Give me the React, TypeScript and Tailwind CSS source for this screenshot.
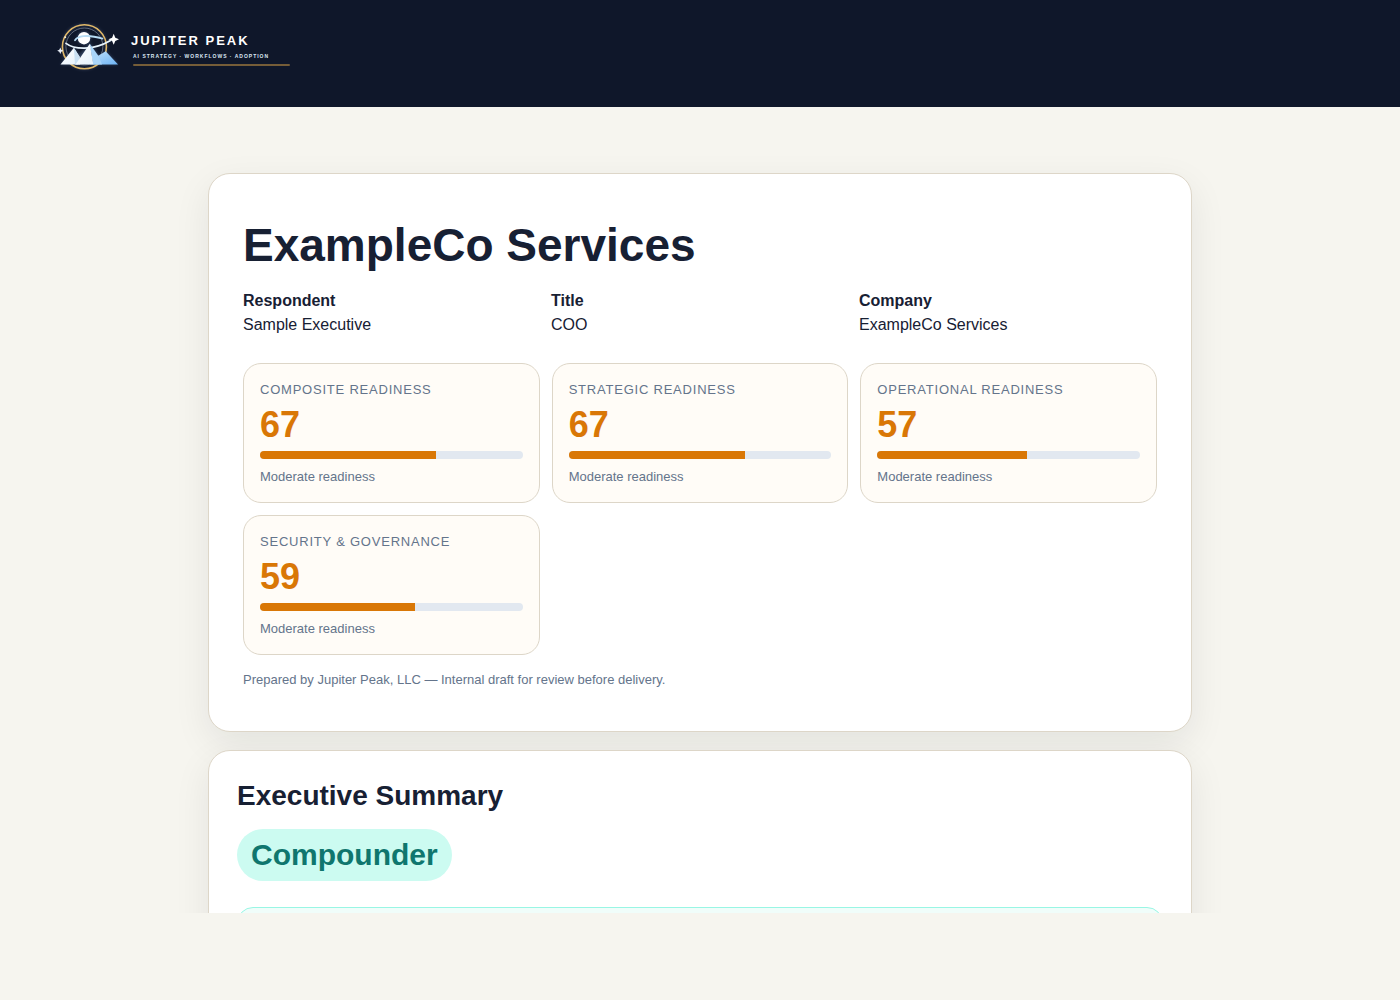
const respondent = [
  { label: 'Respondent', value: 'Sample Executive' },
  { label: 'Title', value: 'COO' },
  { label: 'Company', value: 'ExampleCo Services' },
];

const scores = [
  { label: 'Composite Readiness', value: 67, note: 'Moderate readiness' },
  { label: 'Strategic Readiness', value: 67, note: 'Moderate readiness' },
  { label: 'Operational Readiness', value: 57, note: 'Moderate readiness' },
  { label: 'Security & Governance', value: 59, note: 'Moderate readiness' },
];

function LogoMark() {
  return (
    <svg className="h-14 w-18 shrink-0" viewBox="52 18 72 56" fill="none" aria-hidden="true">
      <defs>
        <linearGradient id="snow" x1="0" y1="0" x2="1" y2="1">
          <stop offset="0" stopColor="#ffffff" />
          <stop offset="1" stopColor="#e6f2fc" />
        </linearGradient>
        <linearGradient id="ice" x1="0" y1="0" x2="1" y2="1">
          <stop offset="0" stopColor="#c4e2fb" />
          <stop offset="1" stopColor="#6db4f5" />
        </linearGradient>
        <filter id="glow" x="-50%" y="-50%" width="200%" height="200%">
          <feGaussianBlur stdDeviation="1.6" />
        </filter>
      </defs>

      {/* Halo */}
      <g filter="url(#glow)" opacity="0.3">
        <circle cx="84.4" cy="46.8" r="22" stroke="#7c8db5" strokeWidth="2" />
        <path d="M60.5 64.5 74 48l5 7 11-12 9 13 7-5 12 13.500Z" fill="#7fa8dd" />
        <circle cx="84" cy="38" r="6.500" fill="#9cc8ff" />
      </g>

      {/* Orbit rings */}
      <circle cx="84.4" cy="46.8" r="22" stroke="#e0b868" strokeWidth="1.600" />
      <circle cx="84.4" cy="46.500" r="18.500" stroke="#6b7688" strokeWidth="0.900" />

      {/* Planet */}
      <circle cx="84" cy="38.200" r="6.200" fill="#ffffff" />
      <path d="M75 40.300C77.500 36.400 86 33.800 102.500 38.600" stroke="#b7dcf4" strokeWidth="1.800" strokeLinecap="round" />
      <path d="M66 43.400C74 49.500 93 51 110.500 40.600" stroke="#e6f3fc" strokeWidth="1.800" strokeLinecap="round" />

      {/* Peaks */}
      <path d="M90 64.400 97 56.500 105.700 51.200 118 64.400Z" fill="url(#ice)" />
      <path d="M60.500 64.400 73.900 47.800 79.500 56.500 80 64.400Z" fill="url(#snow)" />
      <path d="M73.900 47.800 80 57.500 78 64.400 75 64.400Z" fill="#c9e1f4" />
      <path d="M89.800 43.800 98.500 56 102 64.400 93 64.400Z" fill="#a9d5fa" />
      <path d="M75.500 64.400 89.800 43.800 93.300 64.400Z" fill="url(#snow)" />

      {/* Stars */}
      <path d="M113.700 33.800 115.300 37.700 119 39.300 115.300 40.900 113.700 44.800 112.100 40.900 108.400 39.300 112.100 37.700Z" fill="#ffffff" />
      <path d="M60.300 47.400 61.300 49.700 63.400 50.700 61.300 51.700 60.300 54 59.300 51.700 57.200 50.700 59.300 49.700Z" fill="#e8eef8" />
      <circle cx="65.200" cy="37.300" r="1" fill="#f5ecd2" />
    </svg>
  );
}

function Logo() {
  return (
    <a href="#" className="flex items-start gap-[7px] text-white">
      <LogoMark />
      <span className="flex flex-col pt-[15px]">
        <span className="text-[13px] leading-4 font-bold tracking-[2px]">JUPITER PEAK</span>
        <span className="mt-[3px] pl-0.5 text-[5px] leading-2 font-bold tracking-[1px] text-[#dbe6f3]">
          AI STRATEGY · WORKFLOWS · ADOPTION
        </span>
        <span className="mt-1 ml-0.5 h-0.5 w-[157px] rounded-full bg-[#755d38]" />
      </span>
    </a>
  );
}

function ScoreCard({ label, value, note }: { label: string; value: number; note: string }) {
  return (
    <div className="rounded-[18px] border border-[#ddd6c8] bg-[#fffcf7] p-4">
      <div className="text-[13px] leading-5 tracking-[0.78px] text-[#64748b] uppercase">{label}</div>
      <div className="mt-[5px] mb-1.5 text-4xl leading-10 font-bold text-[#d97706]">{value}</div>
      <div className="h-2 overflow-hidden rounded-full bg-[#e2e8f0]">
        <div className="h-full bg-[#d97706]" style={{ width: `${value}%` }} />
      </div>
      <div className="mt-2 text-[13px] leading-[19px] text-[#64748b]">{note}</div>
    </div>
  );
}

export default function App() {
  return (
    <div className="min-h-screen bg-[#f6f5ef] font-['Liberation_Sans',Arial,sans-serif] text-[#172033]">
      <header className="flex bg-[#0f172a] px-13 pt-4.5 pb-[33px]">
        <Logo />
      </header>

      {/* Report preview, cut off at the frame's lower edge */}
      <main className="max-h-[806px] overflow-hidden px-6 pt-[66px]">
        <div className="mx-auto flex max-w-[984px] flex-col gap-4.5">
          <section className="rounded-[22px] border border-[#ddd6c8] bg-white px-[34px] py-[42px] shadow-[0_12px_36px_rgba(15,23,42,0.08)]">
            <h1 className="text-[46px] leading-[58px] font-bold">ExampleCo Services</h1>
            <dl className="mt-[15px] grid grid-cols-3 gap-2.5 text-base leading-6">
              {respondent.map((item) => (
                <div key={item.label}>
                  <dt className="font-bold">{item.label}</dt>
                  <dd>{item.value}</dd>
                </div>
              ))}
            </dl>
            <div className="mt-[26px] grid grid-cols-3 gap-3">
              {scores.map((score) => (
                <ScoreCard key={score.label} {...score} />
              ))}
            </div>
            <p className="mt-[15px] text-[13px] leading-[19px] text-[#64748b]">
              Prepared by Jupiter Peak, LLC — Internal draft for review before delivery.
            </p>
          </section>

          <section className="rounded-[22px] border border-[#ddd6c8] bg-white p-7 shadow-[0_12px_36px_rgba(15,23,42,0.08)]">
            <h2 className="text-[28px] leading-[34px] font-bold">Executive Summary</h2>
            <div className="mt-4 w-fit rounded-full bg-[#ccfbf1] px-3.5 py-2 text-3xl leading-9 font-bold text-[#0f766e]">
              Compounder
            </div>
            <div className="mt-[26px] min-h-40 rounded-2xl border border-[#99f6e4] bg-[#f0fdfa]" />
          </section>
        </div>
      </main>
    </div>
  );
}
